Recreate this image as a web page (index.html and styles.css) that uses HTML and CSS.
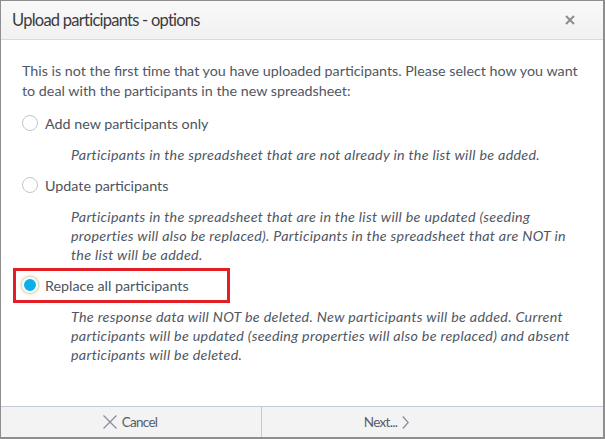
FILE: index.html
```html
<!DOCTYPE html>
<html>
<head>
<meta charset="utf-8">
<link rel="stylesheet" href="styles.css">
</head>
<body>
<div class="dialog">
  <div class="header">
    <span class="title">Upload participants - options</span>
    <svg class="close" width="10" height="10" viewBox="0 0 10 10"><path d="M1 1 L9 9 M9 1 L1 9" stroke="#8a8d92" stroke-width="2" fill="none"/></svg>
  </div>
  <div class="body">
    <p class="intro">This is not the first time that you have uploaded participants. Please select how you want to deal with the participants in the new spreadsheet:</p>
    <div class="option">
      <span class="radio"></span><span class="label">Add new participants only</span>
    </div>
    <p class="desc">Participants in the spreadsheet that are not already in the list will be added.</p>
    <div class="option">
      <span class="radio"></span><span class="label">Update participants</span>
    </div>
    <p class="desc">Participants in the spreadsheet that are in the list will be updated (seeding properties will also be replaced). Participants in the spreadsheet that are NOT in the list will be added.</p>
    <div class="option selected">
      <span class="radio checked"></span><span class="label">Replace all participants</span>
    </div>
    <p class="desc">The response data will NOT be deleted. New participants will be added. Current participants will be updated (seeding properties will also be replaced) and absent participants will be deleted.</p>
  </div>
  <div class="footer">
    <div class="btn cancel">
      <svg width="14" height="14" viewBox="0 0 14 14"><path d="M0.5 0.5 L13.5 13.5 M13.5 0.5 L0.5 13.5" stroke="#858d9c" stroke-width="1.2" fill="none"/></svg>
      <span>Cancel</span>
    </div>
    <div class="btn next">
      <span>Next...</span>
      <svg width="7" height="13" viewBox="0 0 7 13"><path d="M0.8 0.5 L6.2 6.5 L0.8 12.5" stroke="#858d9c" stroke-width="1.2" fill="none"/></svg>
    </div>
  </div>
</div>
</body>
</html>
```

FILE: styles.css
```css
html, body {
  margin: 0;
  padding: 0;
  background: #8e8e8e;
  width: 605px;
  height: 439px;
  overflow: hidden;
}
.dialog {
  margin: 1px 0 0 1px;
  width: 602px;
  height: 436px;
  background: #fff;
  display: flex;
  flex-direction: column;
  font-family: Lato, "Noto Sans", sans-serif;
  color: #4f5763;
}
.header {
  height: 38px;
  background: linear-gradient(#f9f9f9, #f1f1f1);
  border-bottom: 1px solid #d9d9d9;
  display: flex;
  align-items: center;
  justify-content: space-between;
  padding: 0 28px 0 11px;
  flex-shrink: 0;
}
.title {
  font-size: 16.5px;
  letter-spacing: -0.75px;
  color: #3c3c3c;
}
.body {
  flex: 1;
  padding: 21px 18px 0 21px;
  font-size: 14.3px;
}
p { margin: 0; }
.intro {
  line-height: 19.5px;
  margin-bottom: 11px;
}
.option {
  display: flex;
  align-items: center;
  gap: 7px;
  height: 24px;
}
.option.selected {
  box-sizing: border-box;
  width: 217px;
  height: 35px;
  margin: -5.5px 0 -5.5px -9px;
  padding-left: 6px;
  border: 3px solid #e31e24;
}
.radio {
  width: 14px;
  height: 14px;
  border: 1px solid #c2c6cc;
  border-radius: 50%;
  background: #fff;
  flex-shrink: 0;
}
.radio.checked {
  width: 12px;
  height: 12px;
  background: #0cb0e8;
  border: 2px solid #fff;
  box-shadow: 0 0 0 1px #d5d9df, 0 0 2px 2px #f4e6b4;
}
.label {
  color: #4c5460;
}
.desc {
  font-style: italic;
  letter-spacing: 0.3px;
  line-height: 19px;
  padding-left: 49px;
  margin: 9.5px 0 9.5px;
}
.footer {
  height: 30px;
  border-top: 1px solid #c2c9d8;
  background: #f3f3f3;
  display: flex;
  flex-shrink: 0;
}
.btn {
  display: flex;
  align-items: center;
  justify-content: center;
  gap: 5px;
  font-size: 13.5px;
  letter-spacing: -0.7px;
  color: #565d6b;
}
.cancel {
  box-sizing: border-box;
  width: 261px;
  border-right: 1px solid #c2c9d8;
  padding-right: 2px;
}
.next {
  flex: 1;
  padding-right: 92px;
}
```
